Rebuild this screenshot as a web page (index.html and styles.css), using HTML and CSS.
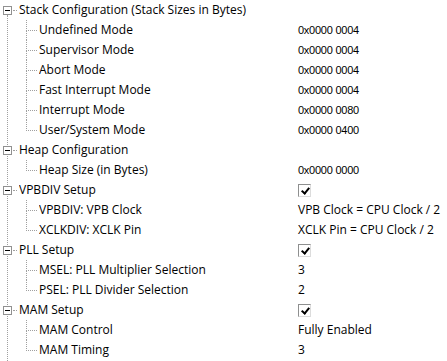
FILE: index.html
```html
<!DOCTYPE html>
<html lang="en">
<head>
  <meta charset="UTF-8">
  <title>Startup Configuration</title>
  <link rel="stylesheet" href="styles.css">
</head>
<body>
  <div class="tree">

    <!-- Stack -->
    <div class="group">
      <div class="row head">
        <span class="expander"></span><span class="stub"></span>
        <span class="name">Stack Configuration (Stack Sizes in Bytes)</span>
        <span class="value"></span>
      </div>
      <div class="children">
        <div class="row child">
          <span class="branch"><i></i><i></i></span>
          <span class="name">Undefined Mode</span>
          <span class="value hex">0x0000 0004</span>
        </div>
        <div class="row child">
          <span class="branch"><i></i><i></i></span>
          <span class="name">Supervisor Mode</span>
          <span class="value hex">0x0000 0004</span>
        </div>
        <div class="row child">
          <span class="branch"><i></i><i></i></span>
          <span class="name">Abort Mode</span>
          <span class="value hex">0x0000 0004</span>
        </div>
        <div class="row child">
          <span class="branch"><i></i><i></i></span>
          <span class="name">Fast Interrupt Mode</span>
          <span class="value hex">0x0000 0004</span>
        </div>
        <div class="row child">
          <span class="branch"><i></i><i></i></span>
          <span class="name">Interrupt Mode</span>
          <span class="value hex">0x0000 0080</span>
        </div>
        <div class="row child last">
          <span class="branch"><i></i><i></i></span>
          <span class="name">User/System Mode</span>
          <span class="value hex">0x0000 0400</span>
        </div>
      </div>
    </div>

    <!-- Heap -->
    <div class="group">
      <div class="row head">
        <span class="expander"></span><span class="stub"></span>
        <span class="name">Heap Configuration</span>
        <span class="value"></span>
      </div>
      <div class="children">
        <div class="row child last">
          <span class="branch"><i></i><i></i></span>
          <span class="name">Heap Size (in Bytes)</span>
          <span class="value hex">0x0000 0000</span>
        </div>
      </div>
    </div>

    <!-- VPBDIV -->
    <div class="group">
      <div class="row head">
        <span class="expander"></span><span class="stub"></span>
        <span class="name">VPBDIV Setup</span>
        <span class="value"><span class="check"></span></span>
      </div>
      <div class="children">
        <div class="row child">
          <span class="branch"><i></i><i></i></span>
          <span class="name">VPBDIV: VPB Clock</span>
          <span class="value">VPB Clock = CPU Clock / 2</span>
        </div>
        <div class="row child last">
          <span class="branch"><i></i><i></i></span>
          <span class="name">XCLKDIV: XCLK Pin</span>
          <span class="value">XCLK Pin = CPU Clock / 2</span>
        </div>
      </div>
    </div>

    <!-- PLL -->
    <div class="group">
      <div class="row head">
        <span class="expander"></span><span class="stub"></span>
        <span class="name">PLL Setup</span>
        <span class="value"><span class="check"></span></span>
      </div>
      <div class="children">
        <div class="row child">
          <span class="branch"><i></i><i></i></span>
          <span class="name">MSEL: PLL Multiplier Selection</span>
          <span class="value">3</span>
        </div>
        <div class="row child last">
          <span class="branch"><i></i><i></i></span>
          <span class="name">PSEL: PLL Divider Selection</span>
          <span class="value">2</span>
        </div>
      </div>
    </div>

    <!-- MAM -->
    <div class="group">
      <div class="row head">
        <span class="expander"></span><span class="stub"></span>
        <span class="name">MAM Setup</span>
        <span class="value"><span class="check"></span></span>
      </div>
      <div class="children">
        <div class="row child">
          <span class="branch"><i></i><i></i></span>
          <span class="name">MAM Control</span>
          <span class="value">Fully Enabled</span>
        </div>
        <div class="row child last">
          <span class="branch"><i></i><i></i></span>
          <span class="name">MAM Timing</span>
          <span class="value">3</span>
        </div>
      </div>
    </div>

  </div>
</body>
</html>
```

FILE: styles.css
```css
* {
  margin: 0;
  padding: 0;
  box-sizing: border-box;
}

body {
  font-family: "Open Sans", "Noto Sans", sans-serif;
  font-size: 12px;
  color: #000;
  background-color: #fff;
}

/* Tree */
.tree {
  position: relative;
  min-height: 100vh;
}

/* root dotted line running past every group */
.tree::before {
  content: "";
  position: absolute;
  left: 7px;
  top: 15px;
  bottom: 0;
  border-left: 1px dotted #a0a0a0;
}

.row {
  display: flex;
  align-items: center;
  height: 20px;
  line-height: 20px;
  white-space: nowrap;
}

.name {
  flex: 1;
  overflow: hidden;
}

.value {
  width: 149px;
  display: flex;
  align-items: center;
}

.hex {
  font-family: "Liberation Sans", Arial, sans-serif;
  font-size: 11px;
  letter-spacing: -0.25px;
}

/* Group header */
.expander {
  position: relative;
  z-index: 1;
  width: 9px;
  height: 9px;
  margin-left: 3px;
  border: 1px solid #919191;
  background-color: #fff;
  display: flex;
  align-items: center;
  justify-content: center;
}

.expander::after {
  content: "";
  width: 5px;
  height: 1px;
  background-color: #000;
}

.stub {
  width: 4px;
  margin-left: 1px;
  margin-right: 2px;
  border-top: 1px dotted #a0a0a0;
}

/* Children */
.children {
  padding-left: 26px;
}

.branch {
  width: 11px;
  height: 20px;
  margin-right: 2px;
  display: flex;
  flex-direction: column;
}

.branch i {
  display: block;
  border-left: 1px dotted #a0a0a0;
}

.branch i:first-child {
  height: 11px;
  border-bottom: 1px dotted #a0a0a0;
}

.branch i:last-child {
  height: 9px;
}

.last .branch i:last-child {
  border-left: none;
}

/* Checkbox */
.check {
  width: 13px;
  height: 13px;
  border: 1px solid #8e8f8f;
  border-right-color: #dcdcdc;
  border-bottom-color: #dcdcdc;
  background-color: #fff;
  position: relative;
}

.check::after {
  content: "";
  position: absolute;
  left: 4px;
  top: 1px;
  width: 3px;
  height: 6px;
  border-right: 2px solid #000;
  border-bottom: 2px solid #000;
  transform: rotate(40deg);
}
```
